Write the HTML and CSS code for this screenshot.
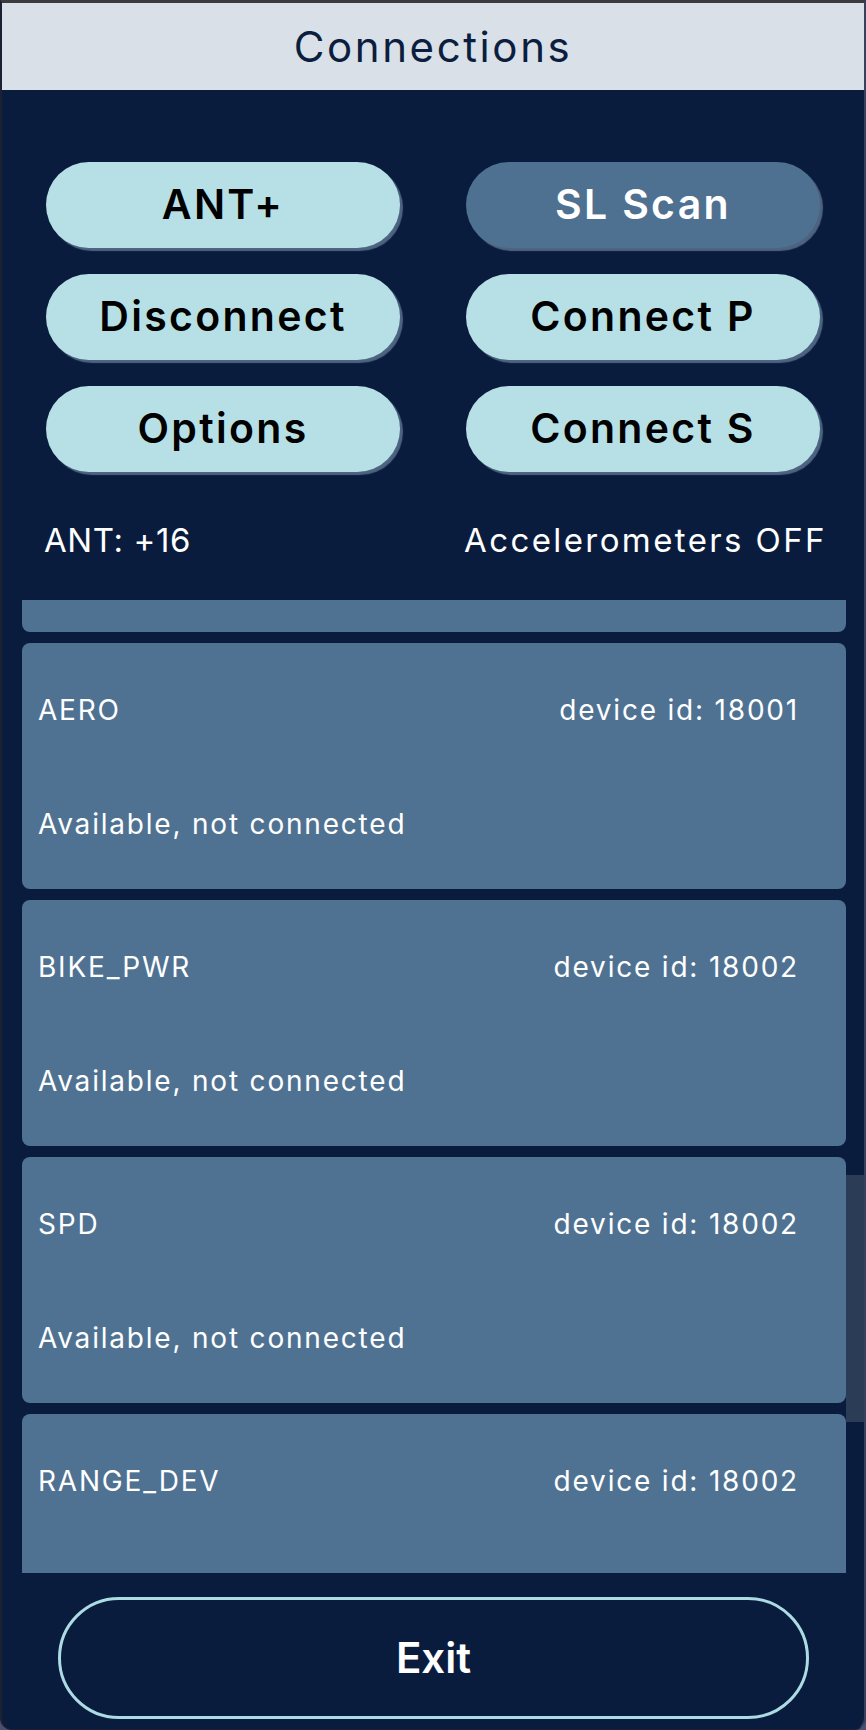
FILE: index.html
```html
<!DOCTYPE html>
<html lang="en">
<head>
<meta charset="utf-8">
<title>Connections</title>
<link rel="stylesheet" href="styles.css">
</head>
<body>
<div class="window">
  <header class="titlebar"><h1 class="title">Connections</h1></header>
  <main class="content">
    <div class="btn-grid">
      <button class="btn">ANT+</button>
      <button class="btn btn-dim">SL Scan</button>
      <button class="btn">Disconnect</button>
      <button class="btn">Connect P</button>
      <button class="btn">Options</button>
      <button class="btn">Connect S</button>
    </div>
    <div class="status">
      <span class="status-left">ANT: +16</span>
      <span class="status-right">Accelerometers OFF</span>
    </div>
    <div class="list-wrap">
      <div class="list">
        <div class="card card-first"></div>
        <div class="card">
          <div class="card-row"><span>AERO</span><span class="devid">device id: 18001</span></div>
          <div class="card-row"><span>Available, not connected</span></div>
        </div>
        <div class="card">
          <div class="card-row"><span>BIKE_PWR</span><span class="devid">device id: 18002</span></div>
          <div class="card-row"><span>Available, not connected</span></div>
        </div>
        <div class="card">
          <div class="card-row"><span>SPD</span><span class="devid">device id: 18002</span></div>
          <div class="card-row"><span>Available, not connected</span></div>
        </div>
        <div class="card">
          <div class="card-row"><span>RANGE_DEV</span><span class="devid">device id: 18002</span></div>
        </div>
      </div>
      <div class="scrollbar"><div class="thumb"></div></div>
    </div>
    <div class="footer">
      <button class="exit">Exit</button>
    </div>
  </main>
</div>
</body>
</html>
```
FILE: styles.css
```css
* { box-sizing: border-box; }
html, body { margin: 0; padding: 0; }
body {
  background: #4c4f72;
  width: 866px;
  height: 1730px;
  overflow: hidden;
  font-family: "Inter", "Liberation Sans", sans-serif;
}
.window {
  width: 866px;
  height: 1730px;
  background: #0a1c3d;
  border-top: 3px solid #3b3b3d;
  border-left: 2px solid #1b2130;
  border-right: 2px solid #34425c;
  border-bottom: 1px solid #1b2130;
  border-radius: 0 0 12px 12px;
  display: flex;
  flex-direction: column;
  overflow: hidden;
}
.titlebar {
  height: 87px;
  background: #d9e0e8;
  display: flex;
  align-items: center;
  justify-content: center;
  flex: none;
}
.title {
  margin: 0;
  font-weight: 400;
  font-size: 42px;
  letter-spacing: 2.6px;
  color: #0b1e3e;
}
.content {
  flex: 1;
  display: flex;
  flex-direction: column;
}
.btn-grid {
  margin-top: 72px;
  display: grid;
  grid-template-columns: 354px 354px;
  grid-auto-rows: 86px;
  column-gap: 66px;
  row-gap: 26px;
  justify-content: center;
}
.btn {
  border: none;
  border-radius: 43px;
  background: #b6e0e6;
  box-shadow: 3px 3px 1px #4d6480;
  font-family: "Inter", "Liberation Sans", sans-serif;
  font-weight: 600;
  font-size: 41px;
  line-height: 1.25;
  letter-spacing: 2.3px;
  color: #000;
  display: flex;
  align-items: center;
  justify-content: center;
  padding: 0;
}
.btn-dim {
  background: #4f7191;
  color: #fff;
}
.status {
  margin-top: 48px;
  height: 40px;
  display: flex;
  justify-content: space-between;
  padding: 0 39px 0 42px;
  font-size: 33px;
  line-height: 40px;
  color: #fff;
}
.status-left { letter-spacing: 0.6px; }
.status-right { letter-spacing: 2.4px; margin-right: -2px; }
.list-wrap {
  margin-top: 40px;
  height: 973px;
  display: flex;
  padding-left: 20px;
  flex: none;
}
.list {
  width: 824px;
  height: 973px;
  overflow: hidden;
}
.card {
  height: 246px;
  margin-bottom: 11px;
  background: #4f7292;
  border-radius: 8px;
  padding: 50px 49px 0 16px;
  display: flex;
  flex-direction: column;
  gap: 80px;
  color: #fff;
  font-size: 28px;
  line-height: 34px;
  letter-spacing: 1.8px;
}
.card-first { margin-top: -214px; }
.card-row {
  display: flex;
  justify-content: space-between;
  height: 34px;
}
.devid { margin-right: -2px; }
.scrollbar {
  width: 18px;
  height: 973px;
  position: relative;
}
.thumb {
  position: absolute;
  top: 575px;
  left: 0;
  width: 18px;
  height: 247px;
  background: #2b3c56;
}
.footer {
  margin-top: 24px;
  display: flex;
  justify-content: center;
}
.exit {
  width: 751px;
  height: 122px;
  border: 3px solid #addbe3;
  border-radius: 61px;
  background: transparent;
  color: #fff;
  font-family: "Inter", "Liberation Sans", sans-serif;
  font-weight: 600;
  font-size: 42px;
  line-height: 1.25;
  padding: 0;
  margin-left: 1px;
}
```
